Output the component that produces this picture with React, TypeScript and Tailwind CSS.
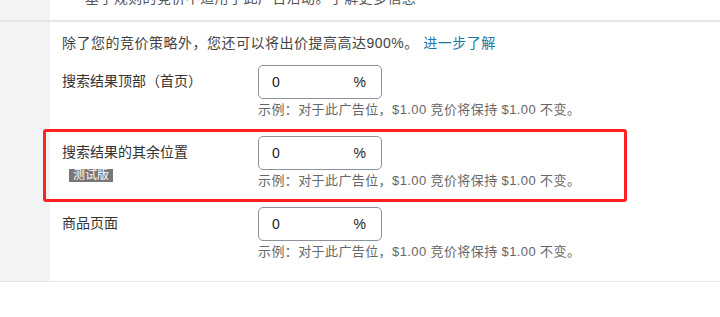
const font = "font-['Liberation_Sans','Noto_Sans_CJK_SC',sans-serif]";

function PercentInput() {
  return (
    <div className="flex h-[34px] w-[124px] items-center justify-between rounded-[5px] border border-[#8a929c] bg-white pl-[13px] pr-[15px] text-[14px] text-[#222]">
      <span>0</span>
      <span>%</span>
    </div>
  );
}

function Example() {
  return (
    <div className="mt-[2px] h-[18px] whitespace-nowrap text-[13px] leading-[18px] tracking-[0.4px] text-[#666]">
      示例：对于此广告位，$1.00 竞价将保持 $1.00 不变。
    </div>
  );
}

function Row({ label, beta, className }: { label: string; beta?: boolean; className?: string }) {
  return (
    <div className={`flex ${className ?? ""}`}>
      <div className="w-[196px] pt-[6px]">
        <div className="h-[20px] text-[14px] leading-[20px] text-[#333]">{label}</div>
        {beta && (
          <div className="ml-[7px] mt-[5px] inline-flex h-[13px] items-center bg-[#777] px-[4px] text-[12px] leading-none text-white">
            测试版
          </div>
        )}
      </div>
      <div>
        <PercentInput />
        <Example />
      </div>
    </div>
  );
}

export default function App() {
  return (
    <div className={`relative h-[317px] w-[720px] overflow-hidden bg-white ${font}`}>
      {/* previous section, cut off at the top */}
      <div className="flex h-[20px]">
        <div className="w-[50px] bg-[#f2f3f5]" />
        <div className="flex-1 overflow-hidden pl-[35px]">
          <div className="-mt-[12px] whitespace-nowrap text-[14px] leading-[20px] tracking-[0.4px] text-[#555]">
            基于规则的竞价不适用于此广告活动。了解更多信息
          </div>
        </div>
      </div>
      <div className="h-[2px] bg-[#e6e7e9]" />

      <div className="flex h-[259px]">
        <div className="w-[50px] bg-[#f2f3f5]" />
        <div className="flex-1 pl-[12px] pt-[11px]">
          <div className="h-[20px] whitespace-nowrap text-[14px] leading-[20px] tracking-[0.5px] text-[#444]">
            除了您的竞价策略外，您还可以将出价提高高达900%。{" "}
            <span className="text-[#1a7aa6]">进一步了解</span>
          </div>
          <Row label="搜索结果顶部（首页）" className="mt-[12px]" />
          <Row label="搜索结果的其余位置" beta className="mt-[17px]" />
          <Row label="商品页面" className="mt-[17px]" />
        </div>
      </div>
      <div className="h-px bg-[#e5e6e8]" />

      {/* annotation */}
      <div className="absolute left-[43px] top-[129px] h-[73px] w-[584px] rounded-[3px] border-[3px] border-[#ff2020]" />
    </div>
  );
}
